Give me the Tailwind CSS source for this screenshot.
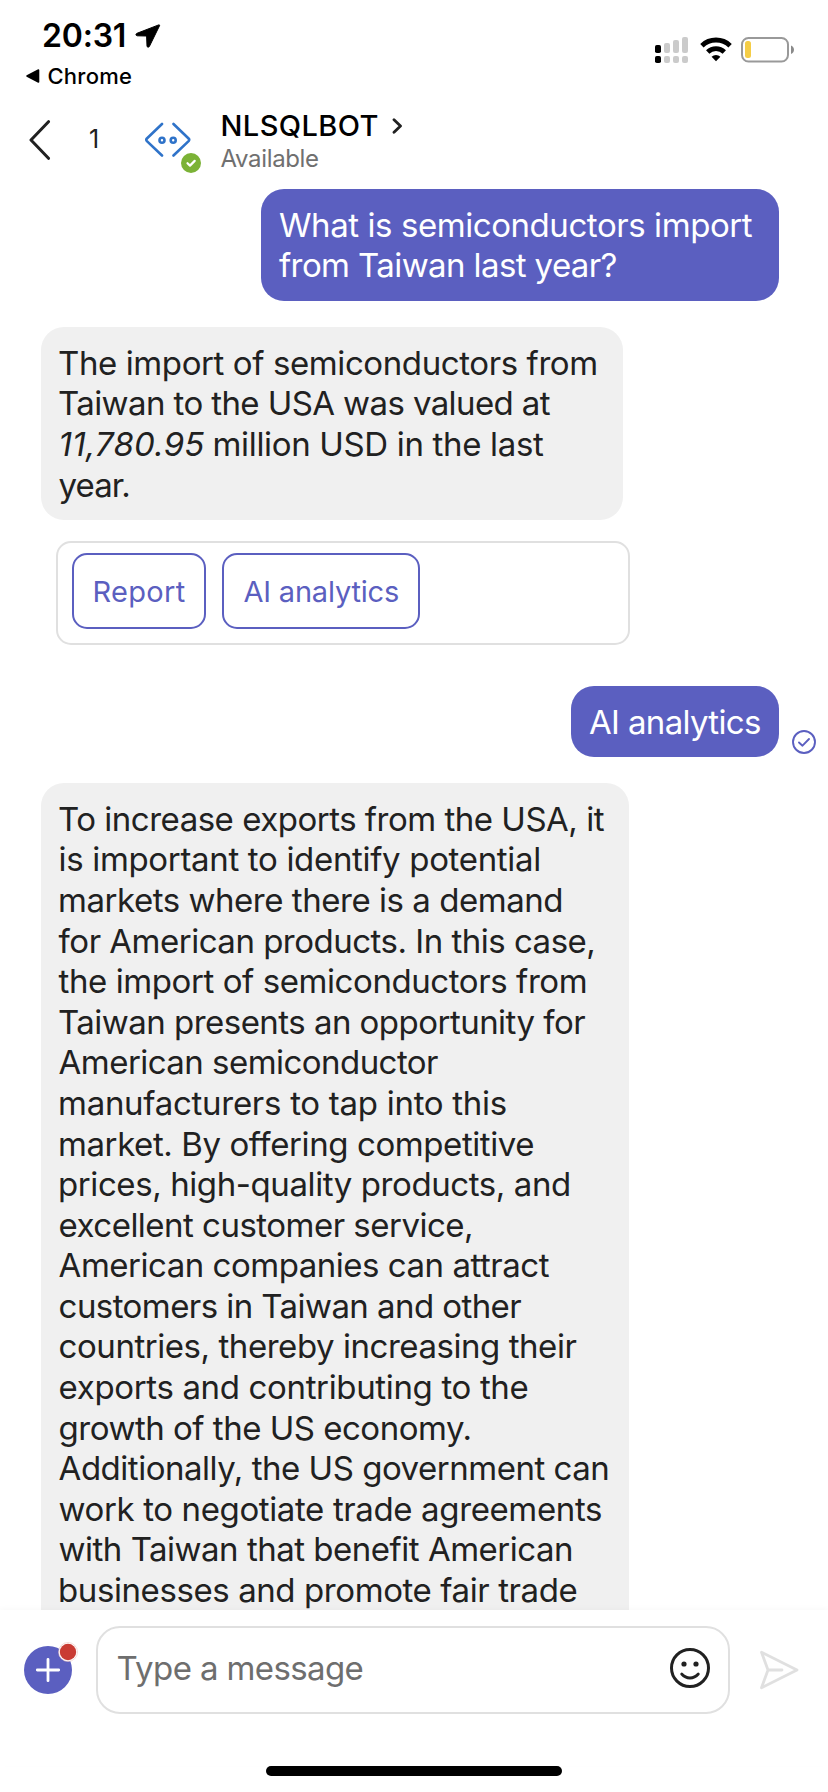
<!DOCTYPE html>
<html lang="en">
<head>
<meta charset="utf-8">
<title>NLSQLBOT chat</title>
<script src="https://cdn.jsdelivr.net/npm/@tailwindcss/browser@4"></script>
</head>
<body class="bg-white">
<div class="flex h-[1792px] w-[828px] flex-col overflow-hidden bg-white font-['Inter','Liberation_Sans',sans-serif] text-[#212121]">

  <!-- Status bar -->
  <div class="flex h-[100px] shrink-0 justify-between text-black">
    <div class="flex flex-col pt-4">
      <div class="flex h-10 items-center pl-[42px]">
        <span class="w-[93px] whitespace-nowrap text-[32px] leading-10 font-semibold tracking-[-0.2px]">20:31</span>
        <svg class="h-6 w-[26px]" viewBox="0 0 26 24"><path d="M23.7.9 2 9.3c-1.6.8-1.300 2.300.3 2.500l9.300.2.4 10c.2 1.600 1.800 1.600 2.500.2L24.600 1.600c.2-.5-.3-.9-.9-.7Z" fill="#000" stroke="#000" stroke-linejoin="round"/></svg>
      </div>
      <div class="flex h-10 items-center pl-[26px]">
        <svg class="h-[14px] w-[14px]" viewBox="0 0 14 14"><path d="M12.500 1v12L1 7Z" fill="#000" stroke="#000" stroke-width="1.600" stroke-linejoin="round"/></svg>
        <span class="ml-[7.5px] text-[22px] leading-10 font-medium tracking-[0.24px]">Chrome</span>
      </div>
    </div>
    <div class="flex h-[26px] pt-[37px] pr-[33px]">
      <svg class="h-[26px] w-[34px]" viewBox="0 0 34 26">
        <g fill="#000"><rect x="0" y="8" width="6" height="8" rx="1.800"/><rect x="0" y="19" width="6" height="7" rx="1.800"/></g>
        <g fill="#cbcbcb"><rect x="9" y="6" width="6" height="10" rx="2"/><rect x="18" y="3" width="6" height="13" rx="2"/><rect x="27" y="0" width="6" height="16" rx="2"/><rect x="9" y="19" width="6" height="7" rx="2"/><rect x="18" y="19" width="6" height="7" rx="2"/><rect x="27" y="19" width="6" height="7" rx="2"/></g>
      </svg>
      <svg class="ml-[10.5px] h-[25px] w-[32px]" viewBox="0 0 32 25">
        <g fill="none" stroke="#000" stroke-width="4.800"><path d="M1.900 8.700a20.300 20.300 0 0 1 28.200 0"/><path d="M7.700 14.900a12 12 0 0 1 16.600 0"/></g>
        <path d="M11.600 19.800a6.500 6.500 0 0 1 8.800 0L16 24.200Z" fill="#000"/>
      </svg>
      <svg class="ml-[9.5px] h-[26px] w-[54px]" viewBox="0 0 54 26">
        <rect x="1" y="1" width="46" height="23.500" rx="6.500" fill="none" stroke="#999" stroke-width="2"/>
        <rect x="4" y="4" width="6" height="17" rx="2.500" fill="#f5cd46"/>
        <path d="M50 8.500c4 1.500 4 7 0 8.500Z" fill="#8a8a8a"/>
      </svg>
    </div>
  </div>

  <!-- Conversation header -->
  <div class="flex h-[89px] shrink-0">
    <svg class="mt-5 ml-[29px] h-10 w-[22px]" viewBox="0 0 22 40"><path d="M19.500 1.700 2 20l17.500 18.300" fill="none" stroke="#212121" stroke-width="3" stroke-linecap="round" stroke-linejoin="round"/></svg>
    <span class="mt-[24px] ml-[38px] w-[56px] text-[25px] leading-[30px]">1</span>
    <div class="relative mt-[22px] h-[36px] w-[46px]">
      <svg class="h-[36px] w-[46px]" viewBox="0 0 46 36"><g fill="none" stroke="#2f73c9" stroke-width="2.600" stroke-linecap="round" stroke-linejoin="round"><path d="M17 2 1.900 16.500q-1.200 1.300 0 2.600L17 33.500M28.500 2l15.100 14.500q1.200 1.300 0 2.600L28.500 33.500"/><circle cx="17" cy="18.200" r="2.500"/><circle cx="28.200" cy="18.200" r="2.500"/></g></svg>
      <svg class="absolute top-[31px] left-[36px] h-5 w-5" viewBox="0 0 20 20"><circle cx="10" cy="10" r="10" fill="#7bb236"/><path d="m6.500 10.200 2.500 2.400 4.700-4.700" fill="none" stroke="#fff" stroke-width="2.200" stroke-linecap="round" stroke-linejoin="round"/></svg>
    </div>
    <div class="ml-[29.5px] flex flex-col pt-[8px]">
      <div class="flex h-9 items-center text-black">
        <span class="text-[29px] leading-9 font-medium tracking-[0.4px]">NLSQLBOT</span>
        <svg class="ml-[13px] h-4 w-[11px]" viewBox="0 0 11 16"><path d="m2 1.700 6.500 6.300L2 14.300" fill="none" stroke="#212121" stroke-width="2.800" stroke-linecap="round" stroke-linejoin="round"/></svg>
      </div>
      <span class="text-[24px] leading-[29px] tracking-[-0.35px] text-[#707070]">Available</span>
    </div>
  </div>

  <!-- Messages -->
  <div class="flex h-[1421px] shrink-0 flex-col overflow-hidden text-[33px] leading-[40.58px] whitespace-nowrap">
    <div class="ml-[261px] flex h-[112px] w-[518px] shrink-0 flex-col rounded-[23px] bg-[#5b5fc0] pt-[15.500px] pl-[18px] text-white">
      <span class="tracking-[-0.43px]">What is semiconductors import</span>
      <span class="tracking-[-0.6px]">from Taiwan last year?</span>
    </div>

    <div class="mt-[26px] ml-[41px] flex h-[193px] w-[582px] shrink-0 flex-col rounded-[23px] bg-[#f0f0f0] pt-[15.800px] pl-[17px]">
      <span class="tracking-[-0.4px]">The import of semiconductors from</span>
      <span class="tracking-[-0.6px]">Taiwan to the USA was valued at</span>
      <div class="flex"><em class="w-[154.5px] pl-[0.5px] tracking-[0.2px]">11,780.95</em><span class="tracking-[-0.332px]">million USD in the last</span></div>
      <span class="pl-[0.5px] tracking-[-0.9px]">year.</span>
    </div>

    <div class="mt-[21px] ml-[56px] flex h-[104px] w-[574px] shrink-0 gap-4 rounded-[15px] border-2 border-[#e0e0e0] pt-[10px] pl-[14px] text-[29px] text-[#5b5fc0]">
      <button class="flex h-[76px] w-[134px] items-center rounded-[15px] border-2 border-[#5b5fc0] pt-[2px] pl-[18.500px] tracking-[0.3px]">Report</button>
      <button class="flex h-[76px] w-[198px] items-center rounded-[15px] border-2 border-[#5b5fc0] pt-[2px] pl-[19.500px] tracking-[-0.2px]">AI analytics</button>
    </div>

    <div class="mt-[41px] ml-[571px] flex shrink-0">
      <div class="h-[71px] w-[208px] rounded-[23px] bg-[#5b5fc0] pt-[15.500px] pl-[18px] tracking-[-0.66px] text-white">AI analytics</div>
      <svg class="mt-[44px] ml-[13px] h-6 w-6" viewBox="0 0 24 24"><g fill="none" stroke="#5b5fc0" stroke-width="1.900" stroke-linecap="round" stroke-linejoin="round"><circle cx="12" cy="12" r="11"/><path d="m7 12.500 3.500 3.200L17 9"/></g></svg>
    </div>

    <div class="mt-[26px] ml-[41px] flex w-[588px] shrink-0 flex-col rounded-[23px] bg-[#f0f0f0] pt-[15.900px] pb-[60px] pl-[17px]">
      <span class="tracking-[-0.49px]">To increase exports from the USA, it</span>
      <span class="pl-[0.5px] tracking-[-0.325px]">is important to identify potential</span>
      <span class="tracking-[-0.46px]">markets where there is a demand</span>
      <span class="pl-[0.6px] tracking-[-0.5px]">for American products. In this case,</span>
      <span class="pl-[0.6px] tracking-[-0.42px]">the import of semiconductors from</span>
      <span class="tracking-[-0.53px]">Taiwan presents an opportunity for</span>
      <span class="pl-[0.6px] tracking-[-0.54px]">American semiconductor</span>
      <span class="tracking-[-0.28px]">manufacturers to tap into this</span>
      <span class="tracking-[-0.41px]">market. By offering competitive</span>
      <span class="tracking-[-0.41px]">prices, high-quality products, and</span>
      <span class="pl-[0.6px] tracking-[-0.515px]">excellent customer service,</span>
      <span class="pl-[0.6px] tracking-[-0.48px]">American companies can attract</span>
      <span class="pl-[0.6px] tracking-[-0.57px]">customers in Taiwan and other</span>
      <span class="pl-[0.6px] tracking-[-0.45px]">countries, thereby increasing their</span>
      <span class="pl-[0.6px] tracking-[-0.349px]">exports and contributing to the</span>
      <span class="pl-[0.6px] tracking-[-0.492px]">growth of the US economy.</span>
      <span class="pl-[0.6px] tracking-[-0.48px]">Additionally, the US government can</span>
      <span class="pl-[0.5px] tracking-[-0.375px]">work to negotiate trade agreements</span>
      <span class="pl-[0.5px] tracking-[-0.492px]">with Taiwan that benefit American</span>
      <span class="tracking-[-0.41px]">businesses and promote fair trade</span>
    </div>
  </div>

  <!-- Composer -->
  <div class="z-10 flex h-[156px] shrink-0 items-start bg-white pt-4 pl-6 shadow-[0_-2px_5px_rgba(0,0,0,0.025)]">
    <div class="relative mt-5 size-12">
      <svg class="size-12" viewBox="0 0 48 48"><circle cx="24" cy="24" r="24" fill="#5b5fc0"/><path d="M24 13.300v21.400M13.300 24h21.400" stroke="#fff" stroke-width="2.800" stroke-linecap="round"/></svg>
      <svg class="absolute top-[-4px] left-[34px] size-5" viewBox="0 0 20 20"><circle cx="10" cy="10" r="9.500" fill="#fff" stroke="#e8b8b5" stroke-width=".5"/><circle cx="10" cy="10" r="8.200" fill="#c93b33"/></svg>
    </div>
    <div class="ml-6 flex h-[88px] w-[634px] items-center justify-between rounded-[24px] border-2 border-[#e0e0e0] pr-[18px] pl-[18.500px]">
      <span class="pb-[4px] text-[33px] leading-10 tracking-[-0.62px] text-[#6e6e6e]">Type a message</span>
      <svg class="mb-1 size-10" viewBox="0 0 40 40"><circle cx="20" cy="20" r="18.500" fill="none" stroke="#212121" stroke-width="3"/><circle cx="14" cy="16" r="2.600" fill="#212121"/><circle cx="26" cy="16" r="2.600" fill="#212121"/><path d="M11.700 26c4.600 5.300 12 5.300 16.600 0" fill="none" stroke="#212121" stroke-width="2.800" stroke-linecap="round"/></svg>
    </div>
    <svg class="mt-6 ml-[29px] size-10" viewBox="0 0 40 40"><path d="M2.500 2.200 38 20 2.500 37.800 9 20ZM9 20h14" fill="none" stroke="#e0e0e0" stroke-width="2.800" stroke-linecap="round" stroke-linejoin="round"/></svg>
  </div>
  <div class="mx-auto h-[10px] w-[296px] shrink-0 rounded-full bg-black"></div>
</div>
</body>
</html>
